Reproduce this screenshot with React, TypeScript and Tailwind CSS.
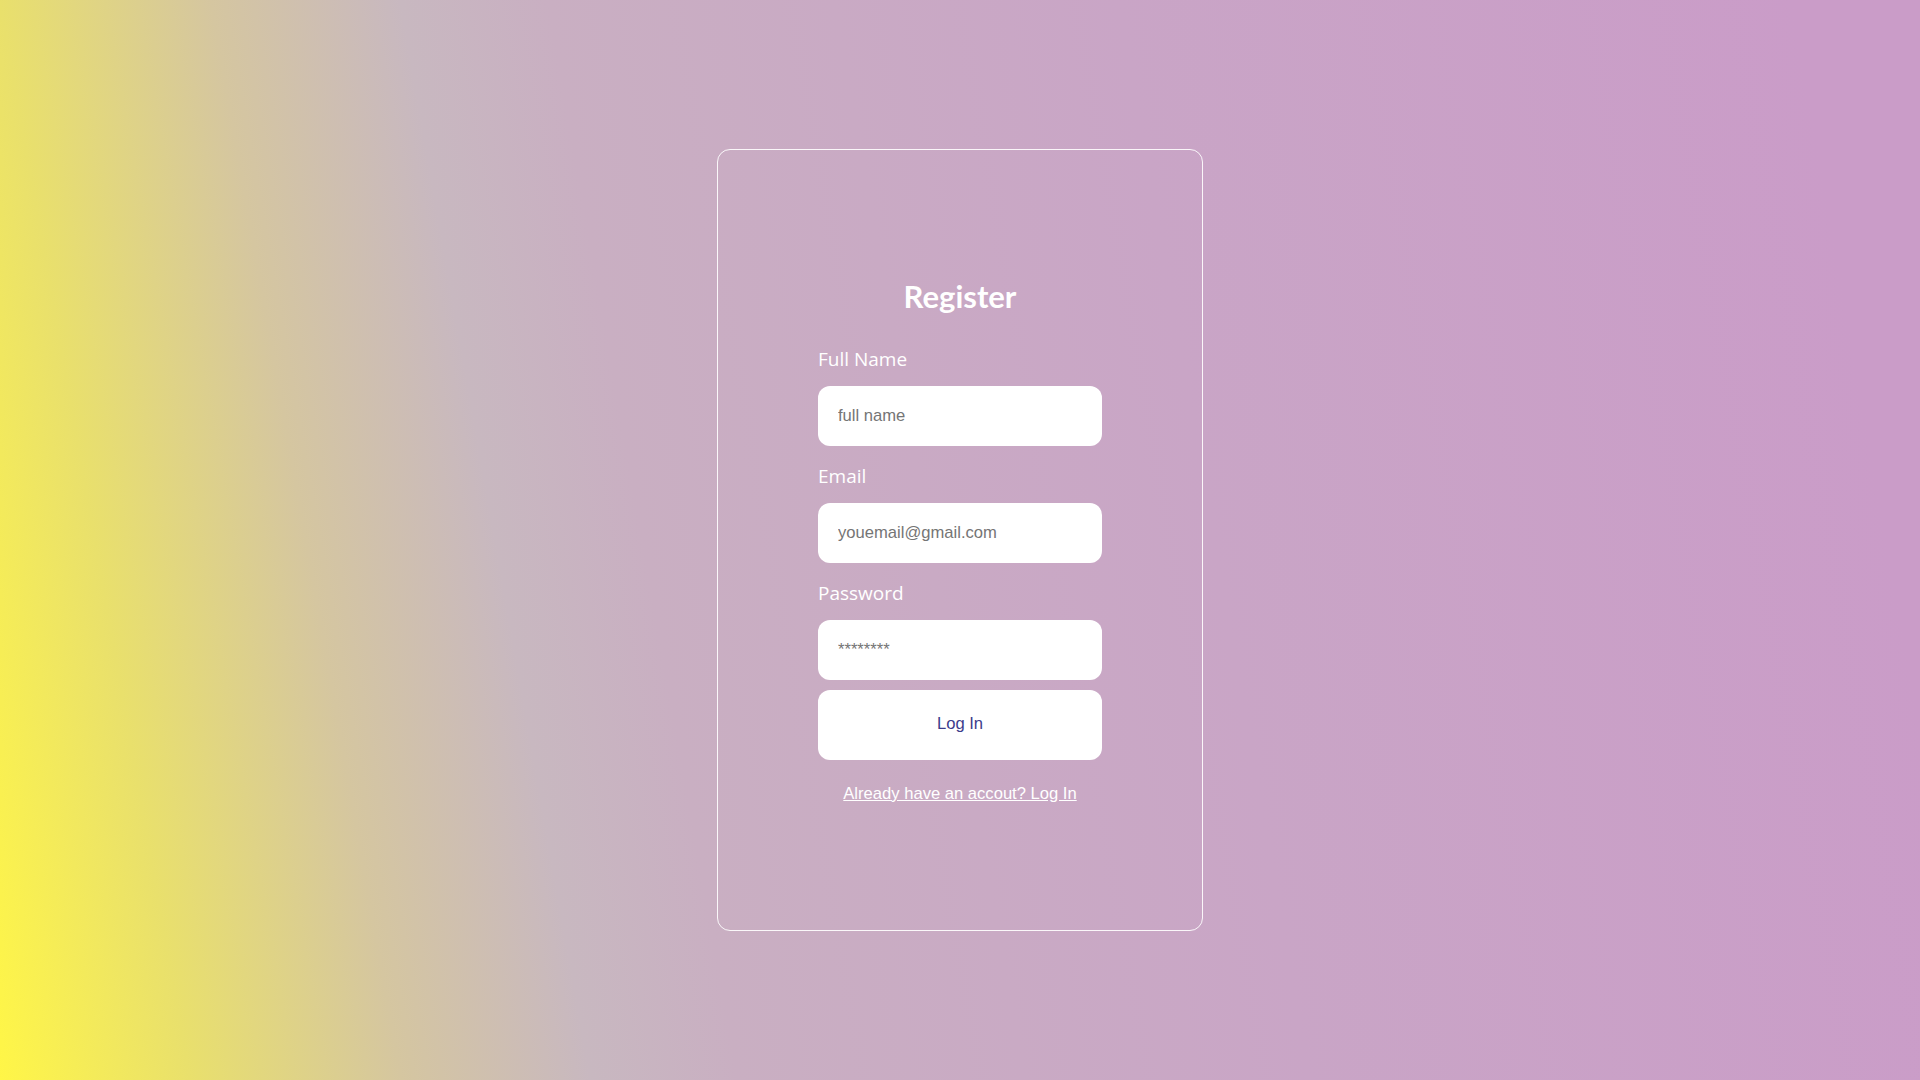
import React from "react";

type Field = {
    label: string;
    type: string;
    placeholder: string;
};

const fields: Field[] = [
    { label: "Full Name", type: "text", placeholder: "full name" },
    { label: "Email", type: "email", placeholder: "youemail@gmail.com" },
    { label: "Password", type: "password", placeholder: "********" },
];

function App() {
    return (
        <div className="flex min-h-screen w-full items-center justify-center bg-[linear-gradient(80deg,#fff647_0%,#e9e06c_9%,#d5c6a0_19%,#c8b8c0_28%,#c9afc2_35%,#c9a5c6_62%,#ca9cc8_94%)]">
            <div className="flex h-[782px] w-[486px] flex-col items-center justify-center rounded-[13px] border border-white/90 pt-[6px]">
                <form className="flex w-[284px] flex-col" onSubmit={(e) => e.preventDefault()}>
                    <h2 className="mb-[35px] text-center font-['Lato',sans-serif] text-[31px] font-bold leading-none text-white">
                        Register
                    </h2>
                    {fields.map((field, i) => (
                        <div key={field.label} className={i > 0 ? "mt-[18px]" : ""}>
                            <label className="mb-[15px] block font-['Open_Sans',sans-serif] text-[19px] leading-[24px] text-white">
                                {field.label}
                            </label>
                            <input
                                type="text"
                                placeholder={field.placeholder}
                                className="block h-[60px] w-full rounded-[12px] bg-white px-5 font-['Liberation_Sans',Arial,sans-serif] text-[16.6px] text-[#333] outline-none placeholder:text-[#757575]"
                            />
                        </div>
                    ))}
                    <button
                        type="submit"
                        className="mt-[10px] h-[70px] w-full rounded-[12px] bg-white font-['Liberation_Sans',Arial,sans-serif] text-[16.6px] text-[#3c3c8c]"
                    >
                        Log In
                    </button>
                    <a
                        href="#"
                        className="mt-[22px] block text-center font-['Liberation_Sans',Arial,sans-serif] text-[16.6px] leading-[24px] text-white underline"
                    >
                        Already have an accout? Log In
                    </a>
                </form>
            </div>
        </div>
    );
}

export default App;
